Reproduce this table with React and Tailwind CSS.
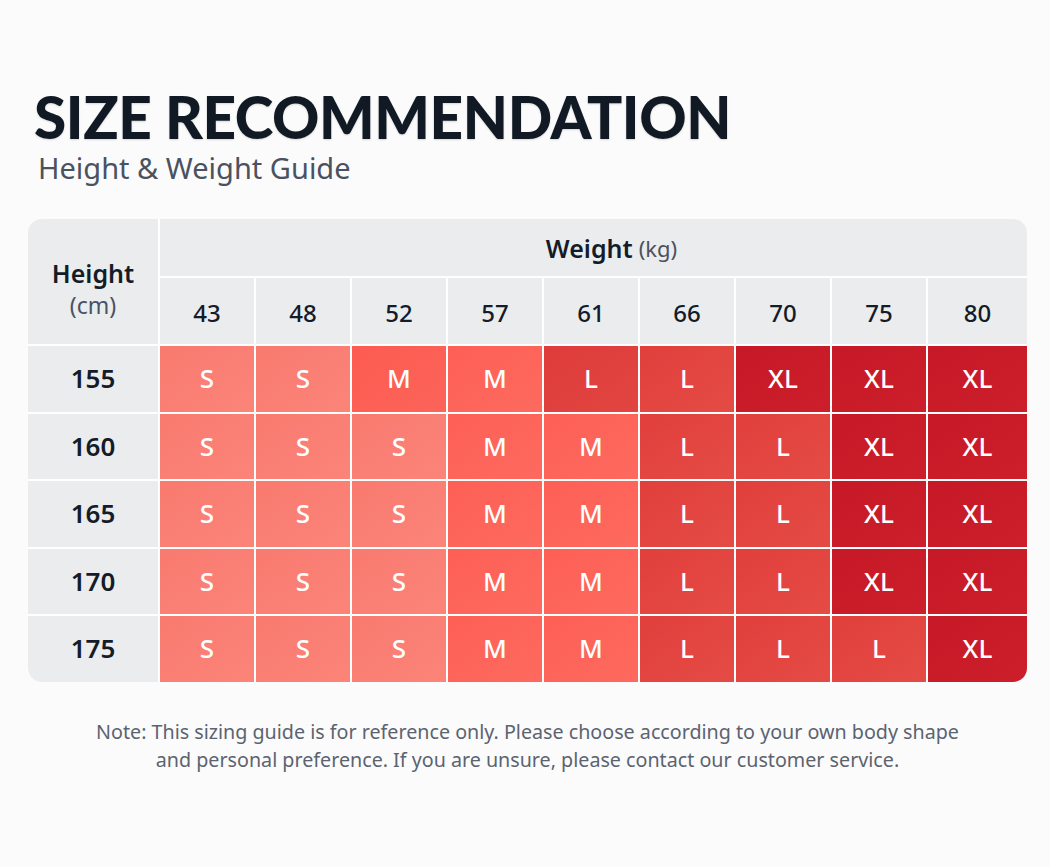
import React from 'react';

const weights = [43, 48, 52, 57, 61, 66, 70, 75, 80];

const rows = [
  { height: 155, sizes: ['S', 'S', 'M2', 'M', 'L2', 'L', 'XL', 'XL', 'XL'] },
  { height: 160, sizes: ['S', 'S', 'S', 'M', 'M', 'L', 'L', 'XL', 'XL'] },
  { height: 165, sizes: ['S', 'S', 'S', 'M', 'M', 'L', 'L', 'XL', 'XL'] },
  { height: 170, sizes: ['S', 'S', 'S', 'M', 'M', 'L', 'L', 'XL', 'XL'] },
  { height: 175, sizes: ['S', 'S', 'S', 'M', 'M', 'L', 'L', 'L', 'XL'] },
];

// cell colours per size, full class strings so tailwind picks them up
const cellStyles = {
  S: 'bg-linear-to-br from-[#f97a6f] to-[#fb8479]',
  M: 'bg-linear-to-br from-[#fe5f55] to-[#fd6a5f]',
  M2: 'bg-linear-to-br from-[#fd5b51] to-[#fc6459]',
  L: 'bg-linear-to-br from-[#e13f3c] to-[#e54b45]',
  L2: 'bg-linear-to-br from-[#de3c3a] to-[#e24541]',
  XL: 'bg-linear-to-br from-[#c61826] to-[#cc1f2b]',
};

const label = (s) => s.replace('2', '');

const App = () => {
  return (
    <div className="min-h-[867px] w-full bg-[#fbfbfb] font-['Noto_Sans',sans-serif]">
      <div className="ml-[28px] w-[999px] pt-[86px]">
        {/* Title */}
        <h1 className="pl-[6px] text-[58.5px] leading-[60px] font-black tracking-[-0.4px] text-[#111a24] font-['Lato',sans-serif] [text-shadow:0_1px_2px_rgba(0,0,0,0.15)]">
          SIZE RECOMMENDATION
        </h1>
        <p className="pl-[10px] mt-[4px] text-[29px] leading-[36px] text-[#4a5261]">
          Height &amp; Weight Guide
        </p>

        {/* Table */}
        <div className="mt-[33px] grid grid-cols-[130px_repeat(8,94px)_1fr] gap-[2px] bg-white rounded-[14px] overflow-hidden">
          {/* Height header cell */}
          <div className="row-span-2 bg-[#ebecee] flex flex-col items-center justify-center pt-[14px]">
            <span className="text-[25px] leading-[32px] font-semibold text-[#131c28]">Height</span>
            <span className="text-[23px] leading-[32px] text-[#4a5261]">(cm)</span>
          </div>
          {/* Weight header */}
          <div className="col-span-9 h-[57px] bg-[#ebecee] flex items-center justify-center pl-[36px] pt-[2px]">
            <span className="text-[25px] font-semibold text-[#131c28]">Weight</span>
            <span className="ml-[6px] text-[22px] text-[#4a5261]">(kg)</span>
          </div>
          {weights.map((w) => (
            <div key={w} className="h-[66px] bg-[#ebecee] flex items-center justify-center pt-[4px] text-[24px] font-medium text-[#131c28]">
              {w}
            </div>
          ))}

          {/* Data rows */}
          {rows.map((row) => (
            <React.Fragment key={row.height}>
              <div className="h-[65.5px] bg-[#ebecee] flex items-center justify-center text-[26px] font-semibold text-[#131c28]">
                {row.height}
              </div>
              {row.sizes.map((s, i) => (
                <div
                  key={i}
                  className={`h-[65.5px] flex items-center justify-center text-[26px] font-medium text-white ${cellStyles[s]}`}
                >
                  {label(s)}
                </div>
              ))}
            </React.Fragment>
          ))}
        </div>

        {/* Note */}
        <p className="mt-[36px] text-center text-[19.7px] leading-[28px] text-[#5c6370]">
          Note: This sizing guide is for reference only. Please choose according to your own body shape
          <br />
          and personal preference. If you are unsure, please contact our customer service.
        </p>
      </div>
    </div>
  );
};

export default App;
